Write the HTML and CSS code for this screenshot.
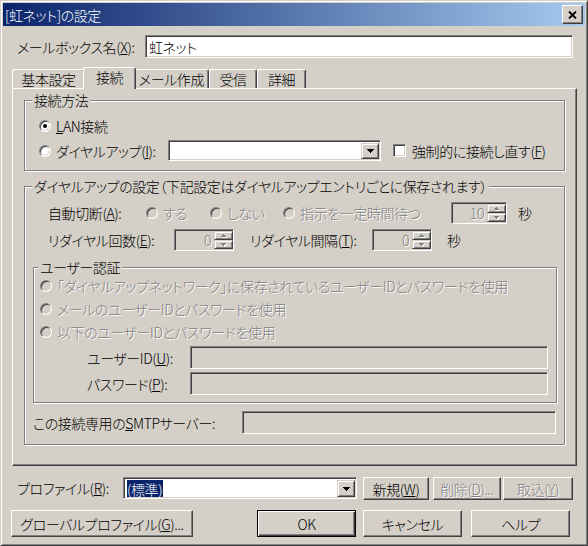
FILE: index.html
```html
<!DOCTYPE html>
<html lang="ja">
<head>
    <meta charset="UTF-8">
    <title>[虹ネット]の設定</title>
    <link rel="stylesheet" href="styles.css">
</head>
<body>

<div class="window">
    <div class="titlebar">
        <span class="title">[虹ネット]の設定</span>
        <span class="close-btn">
            <svg width="9" height="8" viewBox="0 0 9 8"><path d="M1 0.5l7 7M8 0.5l-7 7" stroke="#000" stroke-width="1.8"/></svg>
        </span>
    </div>

    <div class="dialog">
        <div class="mailbox-row">
            <span class="mailbox-label">メールボックス名(<u>X</u>):</span>
            <div class="edit mailbox-edit">虹ネット</div>
        </div>

        <!-- tab strip -->
        <div class="tabs">
            <div class="tab tab-basic">基本設定</div>
            <div class="tab tab-conn selected">接続</div>
            <div class="tab tab-compose">メール作成</div>
            <div class="tab tab-recv">受信</div>
            <div class="tab tab-detail">詳細</div>
        </div>

        <div class="panel">
            <div class="group method-group">
                <div class="group-title">接続方法</div>
                <div class="line lan-line">
                    <span class="radio checked"></span>
                    <span class="opt-text"><u>L</u>AN接続</span>
                </div>
                <div class="line dialup-line">
                    <span class="radio"></span>
                    <span class="opt-text dialup-label">ダイヤルアップ(<u>I</u>):</span>
                    <div class="combo dialup-combo">
                        <span class="combo-value"></span>
                        <span class="drop-btn">
                            <svg width="7" height="4" shape-rendering="crispEdges"><path d="M0 0h7v1h-1v1h-1v1h-1v1h-1v-1h-1v-1h-1v-1h-1z"/></svg>
                        </span>
                    </div>
                    <span class="check"></span>
                    <span class="check-text">強制的に接続し直す(<u>F</u>)</span>
                </div>
            </div>

            <div class="group dialup-group">
                <div class="group-title">ダイヤルアップの設定（下記設定はダイヤルアップエントリごとに保存されます）</div>
                <div class="line auto-line">
                    <span class="auto-label">自動切断(<u>A</u>):</span>
                    <span class="option opt-yes"><span class="radio off"></span><span class="opt-text off-text">する</span></span>
                    <span class="option opt-no"><span class="radio off"></span><span class="opt-text off-text">しない</span></span>
                    <span class="option opt-wait"><span class="radio off"></span><span class="opt-text off-text">指示を一定時間待つ</span></span>
                    <div class="spin spin-wait">
                        <span class="spin-value">10</span>
                        <span class="spin-btns">
                            <span class="spin-btn"><svg width="6" height="4" shape-rendering="crispEdges"><path fill="#fff" d="M3 1h1v1h1v1h1v1h-5v-1h1v-1h1z"/><path fill="#808080" d="M2 0h1v1h1v1h1v1h-5v-1h1v-1h1z"/></svg></span>
                            <span class="spin-btn"><svg width="6" height="4" shape-rendering="crispEdges"><path fill="#fff" d="M1 1h5v1h-1v1h-1v1h-1v-1h-1v-1h-1z"/><path fill="#808080" d="M0 0h5v1h-1v1h-1v1h-1v-1h-1v-1h-1z"/></svg></span>
                        </span>
                    </div>
                    <span class="unit wait-unit">秒</span>
                </div>
                <div class="line redial-line">
                    <span class="redial-label">リダイヤル回数(<u>E</u>):</span>
                    <div class="spin spin-count">
                        <span class="spin-value">0</span>
                        <span class="spin-btns">
                            <span class="spin-btn"><svg width="6" height="4" shape-rendering="crispEdges"><path fill="#fff" d="M3 1h1v1h1v1h1v1h-5v-1h1v-1h1z"/><path fill="#808080" d="M2 0h1v1h1v1h1v1h-5v-1h1v-1h1z"/></svg></span>
                            <span class="spin-btn"><svg width="6" height="4" shape-rendering="crispEdges"><path fill="#fff" d="M1 1h5v1h-1v1h-1v1h-1v-1h-1v-1h-1z"/><path fill="#808080" d="M0 0h5v1h-1v1h-1v1h-1v-1h-1v-1h-1z"/></svg></span>
                        </span>
                    </div>
                    <span class="interval-label">リダイヤル間隔(<u>T</u>):</span>
                    <div class="spin spin-interval">
                        <span class="spin-value">0</span>
                        <span class="spin-btns">
                            <span class="spin-btn"><svg width="6" height="4" shape-rendering="crispEdges"><path fill="#fff" d="M3 1h1v1h1v1h1v1h-5v-1h1v-1h1z"/><path fill="#808080" d="M2 0h1v1h1v1h1v1h-5v-1h1v-1h1z"/></svg></span>
                            <span class="spin-btn"><svg width="6" height="4" shape-rendering="crispEdges"><path fill="#fff" d="M1 1h5v1h-1v1h-1v1h-1v-1h-1v-1h-1z"/><path fill="#808080" d="M0 0h5v1h-1v1h-1v1h-1v-1h-1v-1h-1z"/></svg></span>
                        </span>
                    </div>
                    <span class="unit interval-unit">秒</span>
                </div>

                <div class="group auth-group">
                    <div class="group-title">ユーザー認証</div>
                    <div class="line auth-line first">
                        <span class="radio off"></span>
                        <span class="opt-text off-text">「ダイヤルアップネットワーク」に保存されているユーザーIDとパスワードを使用</span>
                    </div>
                    <div class="line auth-line">
                        <span class="radio off"></span>
                        <span class="opt-text off-text">メールのユーザーIDとパスワードを使用</span>
                    </div>
                    <div class="line auth-line">
                        <span class="radio off"></span>
                        <span class="opt-text off-text">以下のユーザーIDとパスワードを使用</span>
                    </div>
                    <div class="line cred-line user-line">
                        <span class="cred-label">ユーザーID(<u>U</u>):</span>
                        <div class="edit off-edit cred-edit"></div>
                    </div>
                    <div class="line cred-line pass-line">
                        <span class="cred-label">パスワード(<u>P</u>):</span>
                        <div class="edit off-edit cred-edit"></div>
                    </div>
                </div>

                <div class="line smtp-line">
                    <span class="smtp-label">この接続専用の<u>S</u>MTPサーバー:</span>
                    <div class="edit off-edit smtp-edit"></div>
                </div>
            </div>
        </div>

        <div class="profile-row">
            <span class="profile-label">プロファイル(<u>R</u>):</span>
            <div class="combo profile-combo">
                <span class="combo-value"><span class="selection">(標準)</span></span>
                <span class="drop-btn">
                    <svg width="7" height="4" shape-rendering="crispEdges"><path d="M0 0h7v1h-1v1h-1v1h-1v1h-1v-1h-1v-1h-1v-1h-1z"/></svg>
                </span>
            </div>
            <span class="btn btn-new">新規(<u>W</u>)</span>
            <span class="btn btn-delete off-text">削除(<u>D</u>)...</span>
            <span class="btn btn-import off-text">取込(<u>Y</u>)</span>
        </div>

        <div class="button-row">
            <span class="btn btn-global">グローバルプロファイル(<u>G</u>)...</span>
            <span class="btn btn-ok default">OK</span>
            <span class="btn btn-cancel">キャンセル</span>
            <span class="btn btn-help">ヘルプ</span>
        </div>
    </div>
</div>

</body>
</html>
```

FILE: styles.css
```css
body {
    margin: 0;
    background: #d4d0c8;
    font-family: "Noto Sans CJK JP", "Noto Sans", sans-serif;
    font-size: 14px;
    font-weight: 300;
    line-height: 16px;
    letter-spacing: -0.4px;
    font-feature-settings: "palt";
    color: #000;
}
u {
    text-underline-offset: 1px;
}

/* window frame + caption */
.window {
    width: 588px;
    height: 546px;
    box-sizing: border-box;
    border: 1px solid;
    border-color: #d4d0c8 #404040 #404040 #d4d0c8;
    box-shadow: inset 1px 1px #fff, inset -1px -1px #808080;
    padding: 2px;
    background: #d4d0c8;
}
.titlebar {
    height: 23px;
    display: flex;
    align-items: center;
    padding-left: 2px;
    background: linear-gradient(to right, #0a246a, #a6caf0);
    color: #fff;
}
.title {
    flex: 1;
}
.close-btn {
    width: 21px;
    height: 19px;
    box-sizing: border-box;
    margin-right: 2px;
    display: flex;
    align-items: center;
    justify-content: center;
    background: #d4d0c8;
    border: 1px solid;
    border-color: #fff #404040 #404040 #fff;
    box-shadow: inset -1px -1px #808080;
}

.dialog {
    padding: 0 8px 0 9px;
}

/* common controls */
.edit {
    box-sizing: border-box;
    height: 23px;
    border: 1px solid;
    border-color: #808080 #fff #fff #808080;
    box-shadow: inset 1px 1px #404040, inset -1px -1px #d4d0c8;
    background: #fff;
    padding: 3px 3px 0;
}
.off-edit {
    background: #d4d0c8;
}
.combo {
    box-sizing: border-box;
    display: flex;
    border: 1px solid;
    border-color: #808080 #fff #fff #808080;
    box-shadow: inset 1px 1px #404040, inset -1px -1px #d4d0c8;
    background: #fff;
    padding: 2px 1px 1px 2px;
}
.combo-value {
    flex: 1;
    display: flex;
    align-items: center;
}
.drop-btn {
    width: 18px;
    box-sizing: border-box;
    display: flex;
    align-items: center;
    justify-content: center;
    background: #d4d0c8;
    border: 1px solid;
    border-color: #d4d0c8 #404040 #404040 #d4d0c8;
    box-shadow: inset 1px 1px #fff, inset -1px -1px #808080;
}
.btn {
    box-sizing: border-box;
    display: flex;
    align-items: center;
    justify-content: center;
    background: #d4d0c8;
    border: 1px solid;
    border-color: #fff #404040 #404040 #fff;
    box-shadow: inset -1px -1px #808080;
}
.btn.default {
    border-color: #000;
    box-shadow: inset 1px 1px #fff, inset -1px -1px #404040, inset -2px -2px #808080;
}
.off-text {
    color: #808080;
    text-shadow: 1px 1px 0 #fff;
}
.radio {
    flex: none;
    width: 12px;
    height: 12px;
    box-sizing: border-box;
    border-radius: 50%;
    border: 1px solid;
    border-color: #808080 #fff #fff #808080;
    box-shadow: inset 1px 1px #404040, inset -1px -1px #d4d0c8;
    background: #fff;
    display: flex;
    align-items: center;
    justify-content: center;
}
.radio.checked::after {
    content: "";
    width: 4px;
    height: 4px;
    border-radius: 50%;
    background: #000;
}
.radio.off {
    background: #d4d0c8;
}
.opt-text {
    margin-left: 5px;
    white-space: nowrap;
}
.check {
    flex: none;
    width: 13px;
    height: 13px;
    box-sizing: border-box;
    border: 1px solid;
    border-color: #808080 #fff #fff #808080;
    box-shadow: inset 1px 1px #404040, inset -1px -1px #d4d0c8;
    background: #fff;
}
.spin {
    box-sizing: border-box;
    height: 22px;
    display: flex;
    border: 1px solid;
    border-color: #808080 #fff #fff #808080;
    box-shadow: inset 1px 1px #404040, inset -1px -1px #d4d0c8;
    background: #d4d0c8;
    padding: 1px 0 1px 1px;
}
.spin-value {
    flex: 1;
    text-align: right;
    padding-right: 3px;
    line-height: 18px;
    color: #808080;
    text-shadow: 1px 1px 0 #fff;
}
.spin-btns {
    width: 19px;
    display: flex;
    flex-direction: column;
}
.spin-btn {
    flex: 1;
    box-sizing: border-box;
    display: flex;
    align-items: center;
    justify-content: center;
    border: 1px solid;
    border-color: #d4d0c8 #404040 #404040 #d4d0c8;
    box-shadow: inset 1px 1px #fff, inset -1px -1px #808080;
}

/* mailbox name */
.mailbox-row {
    display: flex;
    align-items: center;
    margin-top: 9px;
    height: 23px;
}
.mailbox-label {
    width: 128px;
    padding-left: 5px;
}
.mailbox-edit {
    width: 428px;
}

/* tabs */
.tabs {
    display: flex;
    align-items: flex-end;
    height: 21px;
    margin-top: 9px;
}
.tab {
    height: 19px;
    box-sizing: border-box;
    display: flex;
    align-items: center;
    justify-content: center;
    border: 1px solid;
    border-bottom: 0;
    border-color: #fff #404040 #404040 #fff;
    border-radius: 3px 3px 0 0;
    box-shadow: inset -1px 0 #808080;
    background: #d4d0c8;
}
.tab.selected {
    height: 22px;
    margin: 0 -2px -1px;
    padding-bottom: 3px;
    position: relative;
    z-index: 1;
}
.tab-basic { width: 73px; }
.tab-conn { width: 53px; }
.tab-compose { width: 75px; }
.tab-recv { width: 48px; }
.tab-detail { width: 49px; }

.panel {
    height: 378px;
    box-sizing: border-box;
    border: 1px solid;
    border-color: #fff #404040 #404040 #fff;
    box-shadow: inset -1px -1px #808080;
    padding: 11px;
}

/* group boxes */
.group {
    border: 1px solid #808080;
    box-shadow: inset 1px 1px #fff, 1px 1px #fff;
}
.group-title {
    display: table;
    margin: -9px 0 0 7px;
    padding: 0 2px;
    background: #d4d0c8;
    white-space: nowrap;
}
.line {
    display: flex;
    align-items: center;
}

.method-group {
    padding-bottom: 9px;
}
.lan-line {
    height: 20px;
    margin-top: 8px;
    padding-left: 14px;
}
.dialup-line {
    height: 21px;
    margin-top: 4px;
    padding-left: 14px;
}
.dialup-label {
    width: 112px;
}
.dialup-combo {
    width: 213px;
    height: 21px;
}
.dialup-line .check {
    margin-left: 12px;
}
.check-text {
    margin-left: 6px;
}

.dialup-group {
    margin-top: 15px;
    padding-bottom: 10px;
}
.auto-line {
    height: 22px;
    margin-top: 8px;
    padding-left: 23px;
}
.auto-label { width: 98px; }
.option {
    display: flex;
    align-items: center;
}
.opt-yes { width: 64px; }
.opt-no { width: 73px; }
.opt-wait { width: 168px; }
.spin-wait { width: 56px; }
.wait-unit { margin-left: 11px; }

.redial-line {
    height: 22px;
    margin-top: 5px;
    padding-left: 23px;
}
.redial-label { width: 126px; }
.spin-count { width: 60px; }
.interval-label {
    width: 122px;
    margin-left: 16px;
}
.spin-interval { width: 60px; }
.interval-unit { margin-left: 15px; }

.auth-group {
    margin: 16px 7px 0 8px;
    padding-bottom: 7px;
}
.auth-group .group-title {
    margin-left: 4px;
}
.auth-line {
    height: 20px;
    margin-top: 3px;
    padding-left: 6px;
}
.auth-line.first {
    margin-top: 1px;
}
.cred-line {
    height: 23px;
    padding-left: 53px;
}
.user-line { margin-top: 4px; }
.pass-line { margin-top: 3px; }
.cred-label { width: 103px; }
.cred-edit { width: 358px; }

.smtp-line {
    height: 23px;
    margin-top: 8px;
    padding-left: 8px;
}
.smtp-label { width: 209px; }
.smtp-edit { width: 314px; }

/* profile row */
.profile-row {
    display: flex;
    align-items: flex-start;
    height: 23px;
    margin-top: 11px;
}
.profile-label {
    width: 106px;
    padding-left: 5px;
    line-height: 22px;
}
.profile-combo {
    width: 234px;
    height: 22px;
}
.profile-combo .combo-value {
    padding-left: 1px;
}
.selection {
    background: #0a246a;
    color: #fff;
    padding: 1px 1px 0 0;
}
.profile-row .btn { height: 23px; }
.btn-new { width: 66px; margin-left: 6px; }
.btn-delete { width: 68px; margin-left: 4px; }
.btn-import { width: 70px; margin-left: 2px; }

/* dialog buttons */
.button-row {
    display: flex;
    margin-top: 10px;
}
.button-row .btn { height: 27px; width: 99px; }
.btn-global { width: 182px !important; margin-left: -1px; }
.btn-ok { margin-left: 64px; }
.btn-cancel { margin-left: 7px; }
.btn-help { margin-left: 9px; }
```
